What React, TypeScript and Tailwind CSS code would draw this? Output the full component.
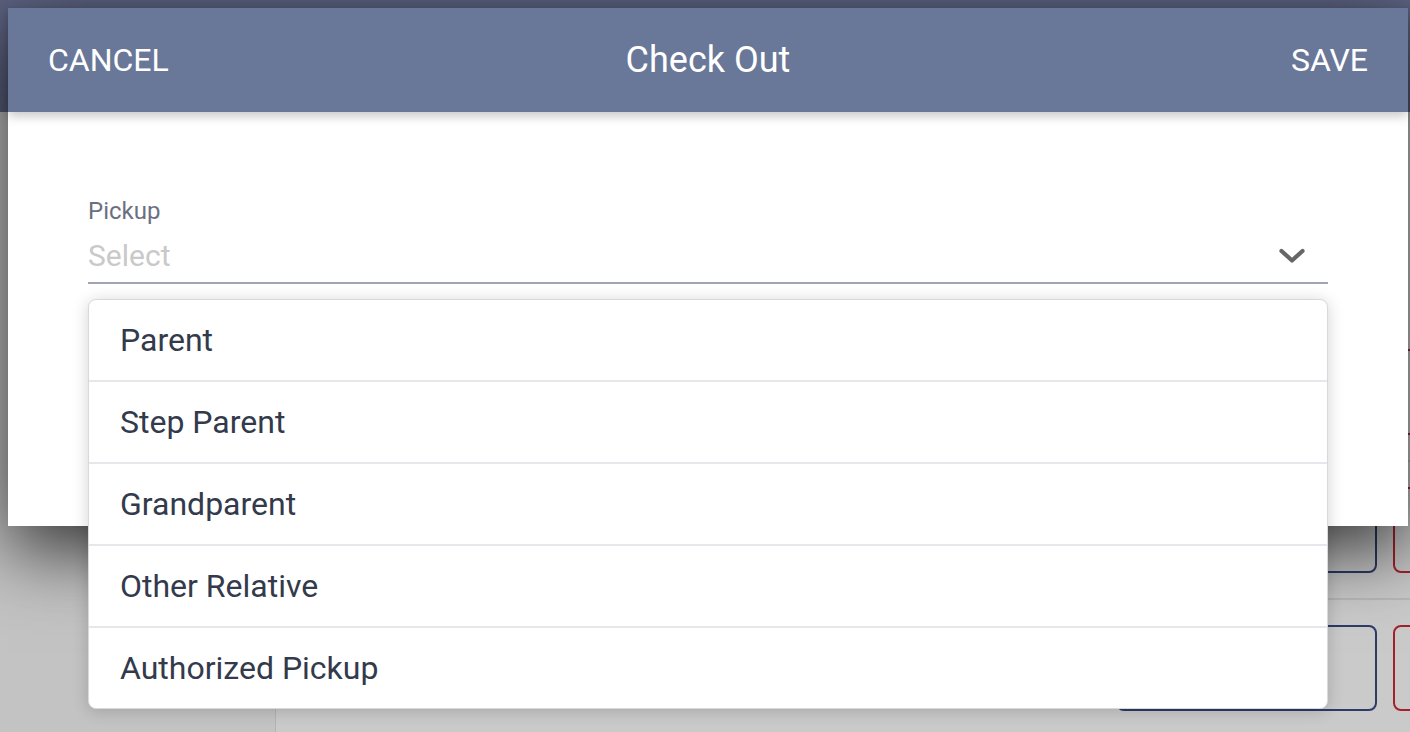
import { useState } from "react";

const options = ["Parent", "Step Parent", "Grandparent", "Other Relative", "Authorized Pickup"];

function Chevron() {
  return (
    <svg width="26" height="16" viewBox="0 0 26 16" fill="none">
      <polyline points="2.5,3 13,12.5 23.5,3" stroke="#666666" strokeWidth="4.2" strokeLinecap="round" strokeLinejoin="round" />
    </svg>
  );
}

function BackgroundPage() {
  const rows = [0, 1, 2];
  return (
    <div className="flex h-full flex-col">
      <div className="h-[112px] shrink-0 bg-[#5c6381]" />
      <div className="flex flex-1 overflow-hidden">
        <aside className="w-[276px] shrink-0 border-r border-[#b3b3b3] bg-[#c3c3c3]" />
        <main className="flex flex-1 flex-col overflow-hidden bg-[#cacaca]">
          <div className="h-[212px] shrink-0" />
          {rows.map((r) => (
            <div key={r} className="flex h-[138px] shrink-0 items-center gap-[16px] border-b-2 border-[#b9b9b9] pl-[840px]">
              <div className="h-[86px] w-[261px] shrink-0 rounded-[8px] border-2 border-[#2d3b66]" />
              <div className="h-[86px] w-[261px] shrink-0 rounded-[8px] border-2 border-[#a3222a]" />
            </div>
          ))}
        </main>
      </div>
    </div>
  );
}

export default function App() {
  const [picked, setPicked] = useState<string | null>(null);
  const [open, setOpen] = useState(true);

  return (
    <div className="relative h-screen w-full overflow-hidden font-['Roboto',sans-serif]">
      <BackgroundPage />

      <div className="absolute left-[8px] top-[8px] flex h-[518px] w-[1400px] flex-col bg-white shadow-[0_24px_70px_rgba(0,0,0,0.75)]">
        <header className="relative z-10 flex h-[104px] shrink-0 items-center justify-between bg-[#697798] px-[40px] text-white shadow-[0_4px_10px_rgba(0,0,0,0.22)]">
          <button className="w-[160px] text-left text-[32px] leading-none">CANCEL</button>
          <h1 className="text-[36px] leading-none">Check Out</h1>
          <button className="w-[160px] text-right text-[32px] leading-none">SAVE</button>
        </header>

        <div className="px-[80px] pt-[86px]">
          <div className="relative">
            <label className="block text-[24px] leading-[26px] text-[#6b7081]">Pickup</label>
            <button
              onClick={() => setOpen(!open)}
              className="mt-[14px] flex w-full items-center justify-between border-b-2 border-[#a1a4b3] pb-[8px] text-left"
            >
              <span className={`text-[30px] leading-[36px] ${picked ? "text-[#313a4b]" : "text-[#c9c9c9]"}`}>{picked ?? "Select"}</span>
              <span className="mr-[23px] flex items-center">
                <Chevron />
              </span>
            </button>

            {open && (
              <ul className="absolute left-0 right-0 top-[calc(100%+15px)] z-20 overflow-hidden rounded-[8px] border border-[#d9d9dd] bg-white shadow-[0_2px_16px_rgba(0,0,0,0.18)]">
                {options.map((o, i) => (
                  <li
                    key={o}
                    onClick={() => {
                      setPicked(o);
                      setOpen(false);
                    }}
                    className={`cursor-pointer px-[31px] py-[22px] text-[32px] leading-[36px] text-[#323a4b] ${i > 0 ? "border-t-2 border-[#e6e6eb]" : ""}`}
                  >
                    {o}
                  </li>
                ))}
              </ul>
            )}
          </div>
        </div>
      </div>
    </div>
  );
}
